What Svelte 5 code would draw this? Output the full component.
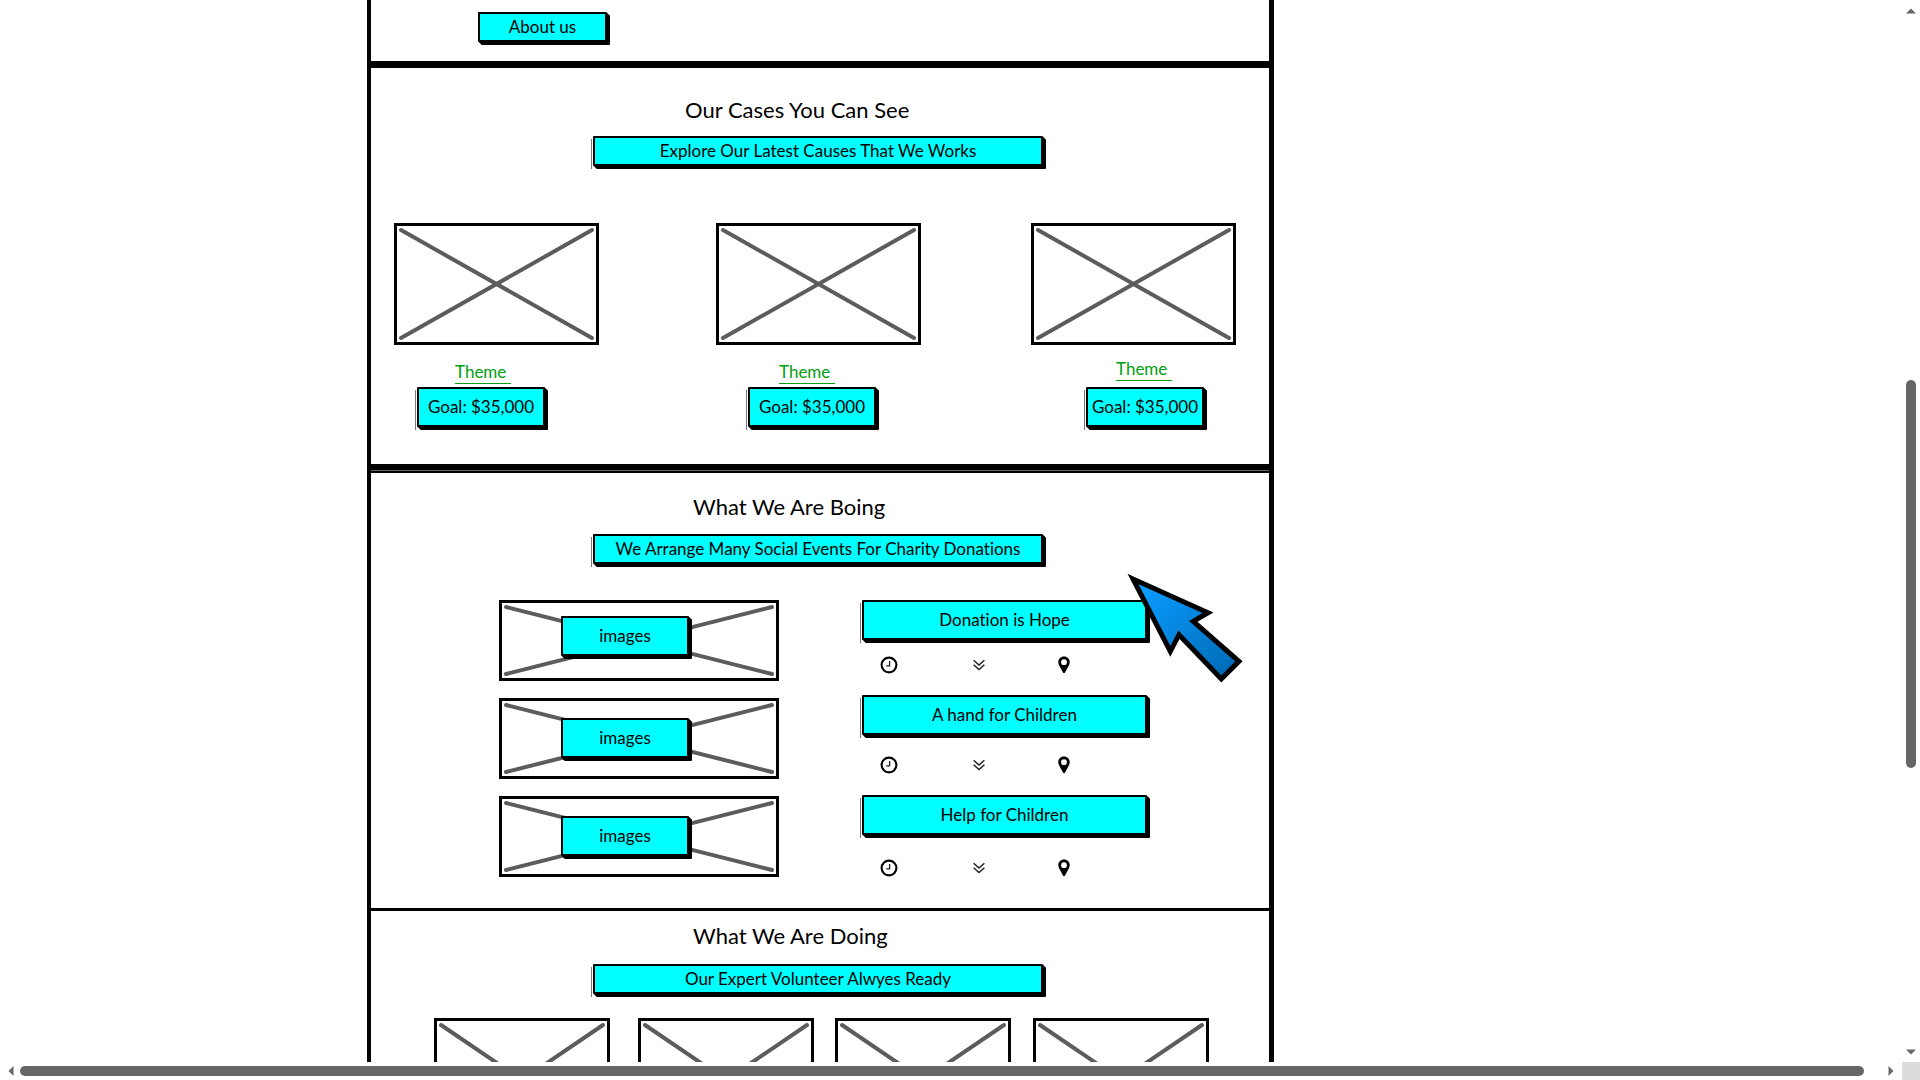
<script>
  // Offsets inside a card differ per column, as in the drawn wireframe.
  const cases = [
    { theme: 'Theme', goal: 'Goal: $35,000', themeX: 61, themeY: 16, goalX: 23, goalW: 128 },
    { theme: 'Theme', goal: 'Goal: $35,000', themeX: 63, themeY: 16, goalX: 32, goalW: 128 },
    { theme: 'Theme', goal: 'Goal: $35,000', themeX: 85, themeY: 13, goalX: 55, goalW: 118 }
  ];

  const tiles = [
    { label: 'images', top: 13 },
    { label: 'images', top: 17 },
    { label: 'images', top: 17 }
  ];

  const events = [
    { title: 'Donation is Hope', gap: 16 },
    { title: 'A hand for Children', gap: 21 },
    { title: 'Help for Children', gap: 24 }
  ];

  const volunteers = [1, 2, 3, 4];
</script>

{#snippet cross()}
  <svg class="cross" aria-hidden="true">
    <line x1="0" y1="0" x2="100%" y2="100%" />
    <line x1="0" y1="100%" x2="100%" y2="0" />
  </svg>
{/snippet}

<div class="window">
  <main class="viewport">
    <div class="frame">
      <section class="about">
        <button class="box about-button">About us</button>
      </section>

      <section class="cases">
        <h2 class="first">Our Cases You Can See</h2>
        <p class="box ghost banner">Explore Our Latest Causes That We Works</p>
        <div class="case-row">
          {#each cases as item}
            <article class="case">
              <div class="picture">{@render cross()}</div>
              <div class="theme" style:padding-left="{item.themeX}px" style:padding-top="{item.themeY}px">
                <a href="#theme">{item.theme}&nbsp;</a>
              </div>
              <div style:padding-left="{item.goalX}px">
                <button class="box ghost goal" style:width="{item.goalW}px">{item.goal}</button>
              </div>
            </article>
          {/each}
        </div>
      </section>

      <section class="events">
        <h2>What We Are Boing</h2>
        <p class="box ghost banner">We Arrange Many Social Events For Charity Donations</p>
        <div class="event-grid">
          <div class="tiles">
            {#each tiles as tile}
              <div class="picture tile">
                {@render cross()}
                <button class="box tile-button" style:top="{tile.top}px">{tile.label}</button>
              </div>
            {/each}
          </div>
          <div class="event-list">
            {#each events as event}
              <article class="event">
                <button class="box ghost event-button">{event.title}</button>
                <div class="icons" style:padding-top="{event.gap}px">
                  <svg class="icon" viewBox="0 0 18 18" aria-hidden="true">
                    <circle cx="9" cy="9" r="7.4" fill="none" stroke="#000" stroke-width="2.1" />
                    <path d="M9.6 4.9V9.9H6.2" fill="none" stroke="#222" stroke-width="1.3" />
                  </svg>
                  <svg class="icon" viewBox="0 0 18 18" aria-hidden="true">
                    <path d="M3.6 4.2 9 9 14.4 4.2M3.6 8.8 9 13.6 14.4 8.8" fill="none" stroke="#222" stroke-width="1.5" />
                  </svg>
                  <svg class="icon" viewBox="0 0 18 18" aria-hidden="true">
                    <path
                      fill-rule="evenodd"
                      d="M9 .5C5.700.5 3.300 2.900 3.300 6c0 1.500.4 2.500 1 3.700L8 16.600c.4.900 1.600.9 2 0l3.700-6.900c.600-1.200 1-2.200 1-3.700C14.700 2.900 12.300.5 9 .5ZM9 3.300a2.900 2.900 0 1 1 0 5.800 2.900 2.900 0 0 1 0-5.800Z"
                    />
                  </svg>
                </div>
              </article>
            {/each}
          </div>
        </div>
      </section>

      <section class="volunteers">
        <h2>What We Are Doing</h2>
        <p class="box ghost banner">Our Expert Volunteer Alwyes Ready</p>
        <div class="volunteer-row">
          {#each volunteers as _}
            <div class="picture">{@render cross()}</div>
          {/each}
        </div>
      </section>

      <svg class="pointer" viewBox="0 0 116 112" aria-hidden="true">
        <defs>
          <linearGradient id="pointer-fill" x1="0" y1="0" x2="1" y2="1">
            <stop offset="0.1" stop-color="#0a9cff" />
            <stop offset="0.9" stop-color="#006cb8" />
          </linearGradient>
        </defs>
        <path
          d="M6 6 81 39.700 66.300 48.300 112 88.300 94.300 106 52 61.700 43.300 78.300Z"
          fill="url(#pointer-fill)"
          stroke="#000"
          stroke-width="5"
          stroke-miterlimit="8"
        />
      </svg>
    </div>
  </main>

  <div class="bar vertical">
    <button class="arrow" aria-label="Scroll up">
      <svg viewBox="0 0 10 6"><path d="M5 .5 10 5.500H0Z" /></svg>
    </button>
    <div class="track"><div class="thumb"></div></div>
    <button class="arrow" aria-label="Scroll down">
      <svg viewBox="0 0 10 6"><path d="M5 5.500 0 .5H10Z" /></svg>
    </button>
  </div>

  <div class="bar horizontal">
    <button class="arrow" aria-label="Scroll left">
      <svg viewBox="0 0 6 10"><path d="M.5 5 5.500 0V10Z" /></svg>
    </button>
    <div class="track"><div class="thumb"></div></div>
    <button class="arrow" aria-label="Scroll right">
      <svg viewBox="0 0 6 10"><path d="M5.500 5 .5 0V10Z" /></svg>
    </button>
  </div>
  <div class="corner"></div>
</div>

<style>
  :global(body) {
    margin: 0;
    background: #fff;
  }

  .window {
    display: grid;
    grid-template-columns: minmax(0, 1fr) 18px;
    grid-template-rows: minmax(0, 1fr) 18px;
    height: 100vh;
    overflow: hidden;
    color: #000;
    font-family: Lato, 'Liberation Sans', sans-serif;
    font-size: 17px;
    line-height: 20px;
    font-variant-ligatures: none;
  }

  .window * {
    box-sizing: border-box;
  }

  .viewport {
    display: grid;
    grid-template-columns: minmax(0, 367fr) minmax(0, 907fr) minmax(0, 628fr);
    align-items: start;
    overflow: hidden;
  }

  .frame {
    grid-column: 2;
    position: relative;
    border: solid #000;
    border-width: 0 5px 0 4px;
    background: #666;
  }

  section {
    border-bottom: 3px solid #000;
    background: #fff;
  }

  h2 {
    margin: 0 0 0 322px;
    font-size: 22px;
    font-weight: 400;
    line-height: 28px;
    white-space: nowrap;
  }

  h2.first {
    margin-left: 314px;
  }

  .box {
    display: block;
    position: relative;
    margin: 0;
    padding: 0;
    border: 2px solid #000;
    border-radius: 1px;
    background: #0ff;
    box-shadow:
      1px 1px 0 #000,
      2px 2px 0 #000,
      3px 3px 0 #000;
    color: #000;
    font: inherit;
    text-align: center;
    white-space: nowrap;
  }

  /* Thin grey stroke left of the box */
  .ghost::before {
    content: '';
    position: absolute;
    top: 1px;
    bottom: -5px;
    left: -4px;
    width: 1px;
    background: #777;
  }

  button {
    cursor: pointer;
  }

  .banner {
    width: 450px;
    height: 30px;
    margin-left: 222px;
    line-height: 26px;
  }

  .about {
    padding: 12px 0 19px 107px;
    border-bottom-width: 7px;
  }

  .about-button {
    width: 129px;
    height: 30px;
  }

  .picture {
    position: relative;
    border: 3px solid #000;
    padding: 4px;
  }

  .cross {
    display: block;
    width: 100%;
    height: 100%;
    overflow: visible;
  }

  .cross line {
    stroke: #5c5c5c;
    stroke-width: 4;
    stroke-linecap: round;
  }

  .cases {
    padding: 28px 0 37px;
    border-bottom-width: 6px;
  }

  .cases .banner {
    margin-top: 12px;
  }

  .case-row {
    display: grid;
    grid-template-columns: minmax(0, 322fr) minmax(0, 315fr) minmax(0, 205fr);
    padding: 57px 33px 0 23px;
  }

  .case .picture {
    max-width: 205px;
    height: 122px;
  }

  .theme {
    height: 42px;
    line-height: 22px;
  }

  .theme a {
    display: inline-block;
    border-bottom: 1px solid #00a010;
    color: #00a010;
    text-decoration: none;
  }

  .goal {
    height: 40px;
  }

  .events {
    margin-top: 1px;
    border-top: 2px solid #000;
    padding: 20px 0 31px;
  }

  .events .banner {
    margin-top: 13px;
  }

  .event-grid {
    display: grid;
    grid-template-columns: minmax(0, 280fr) minmax(0, 285fr);
    column-gap: 83px;
    padding: 36px 122px 0 128px;
  }

  .tiles {
    display: flex;
    flex-direction: column;
    gap: 17px;
  }

  .tile {
    height: 81px;
  }

  .tile-button {
    position: absolute;
    left: 59px;
    width: 128px;
    height: 40px;
  }

  .event {
    margin-bottom: 21px;
  }

  .event:last-child {
    margin-bottom: 0;
  }

  .event-button {
    width: 100%;
    height: 40px;
  }

  .icons {
    display: grid;
    grid-template-columns: 90px 85px 18px;
    padding-left: 18px;
  }

  .icon {
    display: block;
    width: 18px;
    height: 18px;
  }

  .volunteers {
    padding-top: 11px;
    border-bottom: 0;
  }

  .volunteers .banner {
    margin-top: 14px;
  }

  .volunteer-row {
    display: grid;
    grid-template-columns: minmax(0, 204fr) minmax(0, 197fr) minmax(0, 198fr) minmax(0, 176fr);
    padding: 24px 60px 0 63px;
  }

  .volunteer-row .picture {
    max-width: 176px;
    height: 124px;
  }

  /* Large pointer floating over the page */
  .pointer {
    position: absolute;
    top: 573px;
    left: 756px;
    width: 116px;
    height: 112px;
  }

  .bar {
    display: flex;
  }

  .vertical {
    flex-direction: column;
    padding: 6px 4px 7px 4px;
  }

  .horizontal {
    padding: 4px 8px 4px 8px;
  }

  .track {
    display: flex;
    flex: 1;
  }

  .vertical .track {
    flex-direction: column;
    padding: 366px 0 281px;
  }

  .horizontal .track {
    padding: 0 24px 0 6px;
  }

  .thumb {
    flex: 1;
    border-radius: 5px;
    background: #666;
  }

  .arrow {
    display: block;
    flex: none;
    padding: 0;
    border: 0;
    background: none;
  }

  .arrow svg {
    display: block;
    fill: #666;
  }

  .vertical .arrow svg {
    width: 10px;
    height: 6px;
  }

  .vertical .arrow:first-child {
    padding-top: 2px;
  }

  .horizontal .arrow svg {
    width: 6px;
    height: 10px;
  }

  .corner {
    background: #dcdcdc;
  }
</style>
